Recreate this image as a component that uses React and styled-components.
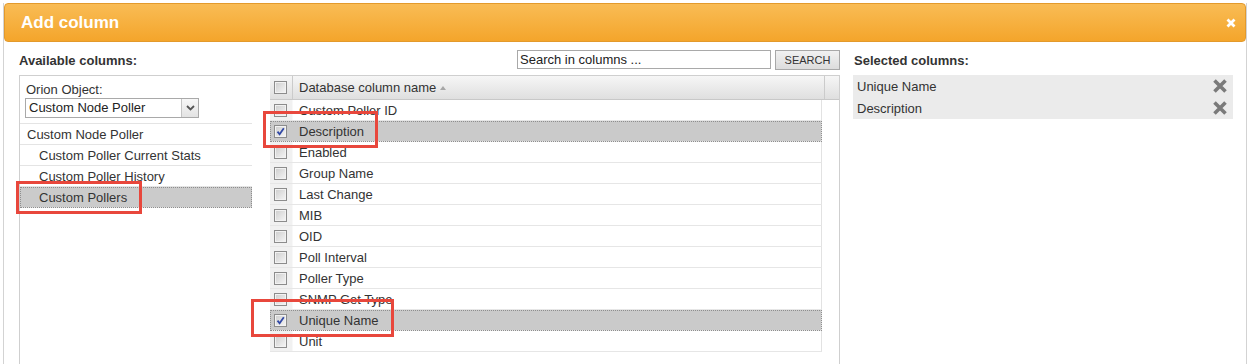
import React from 'react';
import styled, { createGlobalStyle } from 'styled-components';

const GlobalStyle = createGlobalStyle`
  html, body { margin: 0; padding: 0; background: #fff; }
  body {
    font-family: "Liberation Sans", Arial, sans-serif;
    font-size: 13px;
    color: #333;
    overflow: hidden;
  }
  * { box-sizing: border-box; }
`;

const Page = styled.div`
  position: relative;
  width: 1249px;
  height: 364px;
  overflow: hidden;
  padding: 3px 0 0 3px;
`;

const Dialog = styled.div`
  width: 1244px;
  height: 361px;
  border-left: 1px solid #d3d3d3;
  border-right: 1px solid #d3d3d3;
  display: flex;
  flex-direction: column;
`;

const Header = styled.div`
  height: 39px;
  flex: none;
  display: flex;
  align-items: center;
  justify-content: space-between;
  padding: 0 9px 0 16px;
  background: linear-gradient(#f9bc55, #f4a52b);
  border: 1px solid #e39a2c;
  border-radius: 4px;
`;

const Title = styled.div`
  color: #fff;
  font-weight: bold;
  font-size: 17px;
  line-height: 20px;
`;

const CloseIcon = styled.svg`
  width: 10px;
  height: 10px;
  display: block;
`;

const Body = styled.div`
  flex: 1;
  display: flex;
  gap: 13px;
  padding: 8px 13px 0 15px;
  min-height: 0;
`;

const Section = styled.div`
  width: ${(p) => p.$width}px;
  display: flex;
  flex-direction: column;
  gap: 5px;
`;

const TopRow = styled.div`
  height: 20px;
  display: flex;
  align-items: center;
  justify-content: space-between;
  padding-left: ${(p) => p.$indent || 0}px;
`;

const SectionTitle = styled.div`
  font-weight: bold;
  font-size: 13px;
  line-height: 15px;
  color: #333;
`;

const SearchGroup = styled.div`
  display: flex;
  gap: 4px;
  align-items: flex-start;
  height: 20px;
`;

const SearchInput = styled.input`
  width: 254px;
  height: 19px;
  border: 1px solid #a9a9a9;
  padding: 0 2px;
  font-family: "Liberation Sans", Arial, sans-serif;
  font-size: 13px;
  color: #222;
  outline: none;
  &::placeholder { color: #222; opacity: 1; }
`;

const SearchButton = styled.button`
  width: 65px;
  height: 20px;
  border: 1px solid #a8a8a8;
  background: linear-gradient(#f1f1f1, #dcdcdc);
  font-family: "Liberation Sans", Arial, sans-serif;
  font-size: 11px;
  color: #333;
  padding: 0;
  line-height: 18px;
`;

const ContentRow = styled.div`
  flex: 1;
  display: flex;
  border: 1px solid #cfcfcf;
  border-bottom: none;
`;

const ObjectPanel = styled.div`
  width: 250px;
  flex: none;
  display: flex;
  flex-direction: column;
`;

const FieldLabel = styled.div`
  padding: 6px 0 0 6px;
  line-height: 15px;
`;

const SelectBox = styled.div`
  margin: 1px 0 0 5px;
  width: 174px;
  height: 20px;
  border: 1px solid #a9a9a9;
  display: flex;
  background: #fff;
`;

const SelectText = styled.div`
  flex: 1;
  padding-left: 3px;
  line-height: 18px;
  color: #222;
`;

const SelectArrow = styled.div`
  width: 17px;
  border-left: 1px solid #c4c4c4;
  background: linear-gradient(#f7f7f7, #e3e3e3);
  display: flex;
  align-items: center;
  justify-content: center;
`;

const Tree = styled.div`
  margin-top: 5px;
  width: 232px;
  border-top: 1px solid #e4e4e4;
`;

const TreeRow = styled.div`
  height: 21px;
  display: flex;
  align-items: center;
  padding-left: ${(p) => (p.$level ? 19 : 7)}px;
  border-bottom: 1px solid #e4e4e4;
  background: ${(p) => (p.$selected ? '#cbcbcb' : '#fff')};
  ${(p) => p.$selected && 'outline: 1px dotted #8e8e8e; outline-offset: -1px;'}
`;

const Grid = styled.div`
  flex: 1;
  display: flex;
  flex-direction: column;
`;

const GridHeader = styled.div`
  height: 24px;
  display: flex;
  background: linear-gradient(#f6f6f6, #dfdfdf);
  border-bottom: 1px solid #c8c8c8;
`;

const HeaderCheckCell = styled.div`
  width: 23px;
  border-right: 1px solid #cbcbcb;
  display: flex;
  align-items: center;
  padding-left: 4px;
`;

const HeaderNameCell = styled.div`
  width: 532px;
  border-right: 1px solid #cbcbcb;
  display: flex;
  align-items: center;
  padding-left: 6px;
`;

const SortArrow = styled.span`
  width: 0;
  height: 0;
  margin-left: 4px;
  margin-top: 1px;
  border-left: 3.5px solid transparent;
  border-right: 3.5px solid transparent;
  border-bottom: 4px solid #a6a6a6;
`;

const GridBody = styled.div`
  width: 552px;
`;

const GridRow = styled.div`
  height: 21px;
  display: flex;
  border-bottom: 1px solid #e6e6e6;
  border-right: 1px solid #e2e2e2;
  background: ${(p) => (p.$selected ? '#cacaca' : '#fff')};
  ${(p) => p.$selected && 'outline: 1px dotted #8e8e8e; outline-offset: -1px;'}
`;

const CheckCell = styled.div`
  width: 23px;
  display: flex;
  align-items: center;
  padding-left: 4px;
  background: ${(p) => (p.$selected ? 'transparent' : '#f1f1f1')};
  border-right: 1px solid ${(p) => (p.$selected ? 'transparent' : '#f8f8f8')};
`;

const NameCell = styled.div`
  flex: 1;
  padding-left: 6px;
  display: flex;
  align-items: center;
`;

const Box = styled.span`
  width: 13px;
  height: 13px;
  border: 1px solid #8c8c8c;
  background: linear-gradient(135deg, #cdcdcd, #f6f6f6);
  box-shadow: inset 0 0 0 1px #f2f2f2;
  display: flex;
  align-items: center;
  justify-content: center;
`;

const SelectedList = styled.div`
  background: #ebebeb;
`;

const SelectedItem = styled.div`
  height: 22px;
  display: flex;
  align-items: center;
  justify-content: space-between;
  padding: 0 5px 0 4px;
`;

const RemoveIcon = styled.svg`
  width: 16px;
  height: 16px;
  display: block;
`;

const Annotation = styled.div`
  position: absolute;
  border: 3px solid #e8473c;
  pointer-events: none;
`;

const Checkbox = ({ checked }) => (
  <Box>
    {checked && (
      <svg width="9" height="9" viewBox="0 0 9 9">
        <path d="M1.5 4.6 L3.6 7.2 L7.8 1.2" fill="none" stroke="#3249a6" strokeWidth="1.8" />
      </svg>
    )}
  </Box>
);

const rows = [
  { name: 'Custom Poller ID' },
  { name: 'Description', checked: true },
  { name: 'Enabled' },
  { name: 'Group Name' },
  { name: 'Last Change' },
  { name: 'MIB' },
  { name: 'OID' },
  { name: 'Poll Interval' },
  { name: 'Poller Type' },
  { name: 'SNMP Get Type' },
  { name: 'Unique Name', checked: true },
  { name: 'Unit' },
];

const treeItems = [
  { label: 'Custom Node Poller', level: 0 },
  { label: 'Custom Poller Current Stats', level: 1 },
  { label: 'Custom Poller History', level: 1 },
  { label: 'Custom Pollers', level: 1, selected: true },
];

const selected = ['Unique Name', 'Description'];

const annotations = [
  { left: 16, top: 181, width: 126, height: 33 },
  { left: 263, top: 111, width: 115, height: 37 },
  { left: 251, top: 299, width: 143, height: 38 },
];

export default function App() {
  return (
    <>
      <GlobalStyle />
      <Page>
        <Dialog>
          <Header>
            <Title>Add column</Title>
            <CloseIcon viewBox="0 0 10 10">
              <path d="M1.5 1.5 L8.5 8.5 M8.5 1.5 L1.5 8.5" stroke="#fff" strokeWidth="2.8" />
            </CloseIcon>
          </Header>
          <Body>
            <Section $width={821}>
              <TopRow>
                <SectionTitle>Available columns:</SectionTitle>
                <SearchGroup>
                  <SearchInput placeholder="Search in columns ..." />
                  <SearchButton>SEARCH</SearchButton>
                </SearchGroup>
              </TopRow>
              <ContentRow>
                <ObjectPanel>
                  <FieldLabel>Orion Object:</FieldLabel>
                  <SelectBox>
                    <SelectText>Custom Node Poller</SelectText>
                    <SelectArrow>
                      <svg width="9" height="6" viewBox="0 0 9 6">
                        <path d="M1 1 L4.5 4.5 L8 1" fill="none" stroke="#555" strokeWidth="1.8" />
                      </svg>
                    </SelectArrow>
                  </SelectBox>
                  <Tree>
                    {treeItems.map((t) => (
                      <TreeRow key={t.label} $level={t.level} $selected={t.selected}>
                        {t.label}
                      </TreeRow>
                    ))}
                  </Tree>
                </ObjectPanel>
                <Grid>
                  <GridHeader>
                    <HeaderCheckCell>
                      <Checkbox />
                    </HeaderCheckCell>
                    <HeaderNameCell>
                      Database column name
                      <SortArrow />
                    </HeaderNameCell>
                  </GridHeader>
                  <GridBody>
                    {rows.map((r) => (
                      <GridRow key={r.name} $selected={r.checked}>
                        <CheckCell $selected={r.checked}>
                          <Checkbox checked={r.checked} />
                        </CheckCell>
                        <NameCell>{r.name}</NameCell>
                      </GridRow>
                    ))}
                  </GridBody>
                </Grid>
              </ContentRow>
            </Section>
            <Section $width={380}>
              <TopRow $indent={1}>
                <SectionTitle>Selected columns:</SectionTitle>
              </TopRow>
              <SelectedList>
                {selected.map((s) => (
                  <SelectedItem key={s}>
                    {s}
                    <RemoveIcon viewBox="0 0 16 16">
                      <path d="M2.5 2.5 L13.5 13.5 M13.5 2.5 L2.5 13.5" stroke="#7a7a7a" strokeWidth="3.6" />
                    </RemoveIcon>
                  </SelectedItem>
                ))}
              </SelectedList>
            </Section>
          </Body>
        </Dialog>
        {annotations.map((a, i) => (
          <Annotation
            key={i}
            style={{ left: a.left, top: a.top, width: a.width, height: a.height }}
          />
        ))}
      </Page>
    </>
  );
}
